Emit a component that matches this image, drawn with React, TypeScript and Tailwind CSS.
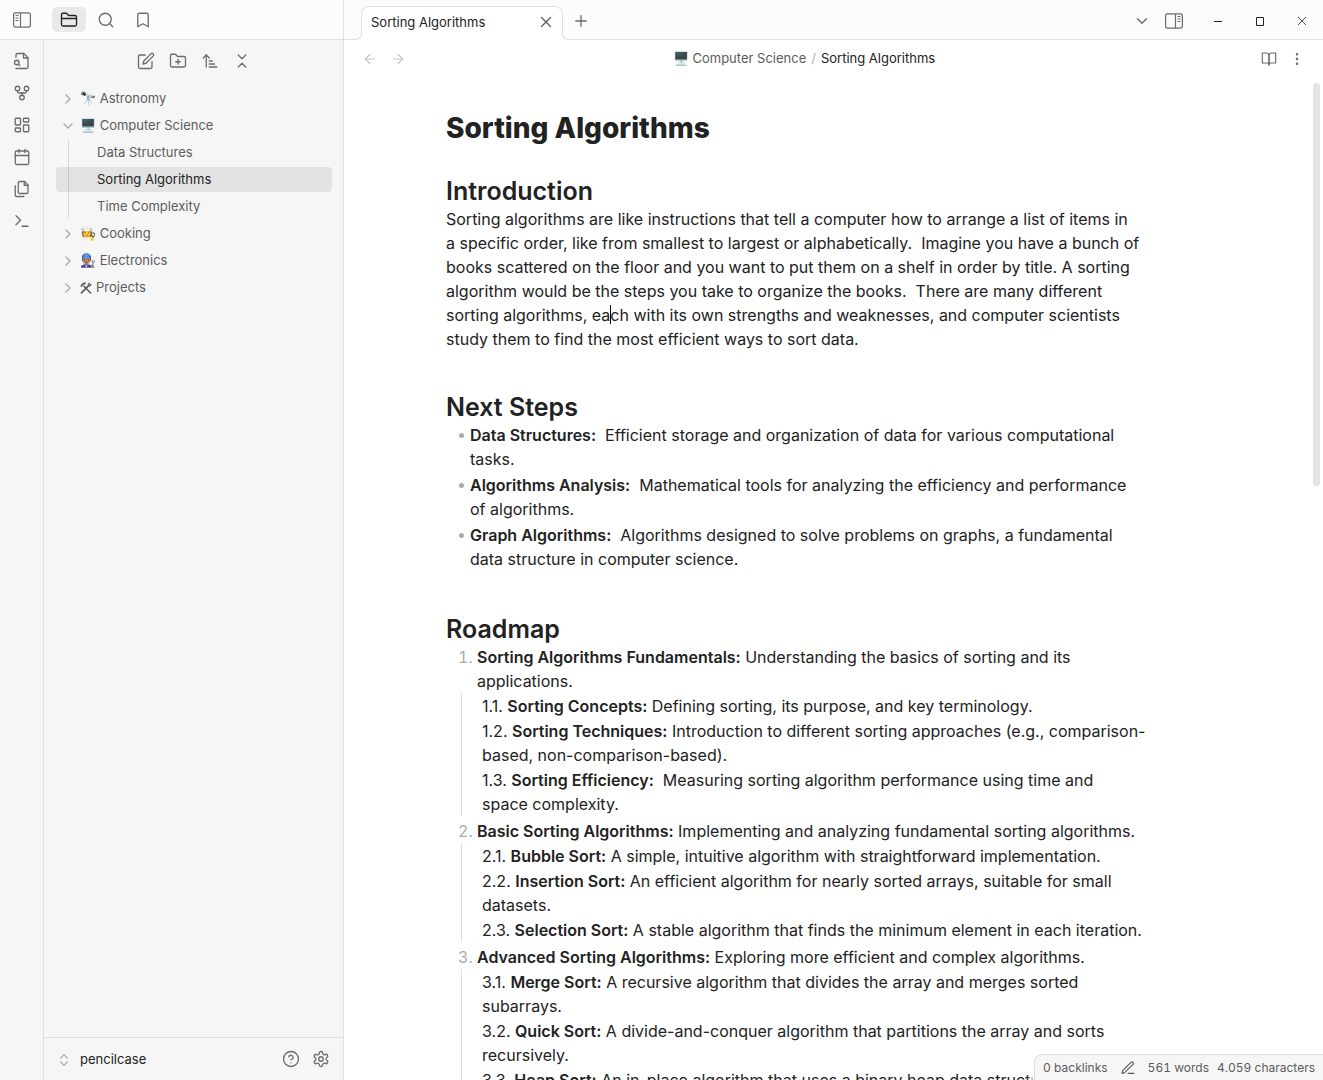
import React from "react";

const glyph = (size: number, stroke: number, className: string) => ({
  width: size,
  height: size,
  viewBox: "0 0 24 24",
  fill: "none",
  stroke: "currentColor",
  strokeWidth: stroke,
  strokeLinecap: "round" as const,
  strokeLinejoin: "round" as const,
  className: "shrink-0 " + className,
  "aria-hidden": true,
});

type IconProps = { paths: string[]; size?: number; stroke?: number; className?: string };

function Icon({ paths, size = 18, stroke = 1.75, className = "" }: IconProps) {
  return (
    <svg {...glyph(size, stroke, className)}>
      {paths.map((d) => (
        <path key={d} d={d} />
      ))}
    </svg>
  );
}

const circle = (x: number, y: number, r: number) =>
  `M${x - r} ${y}a${r} ${r} 0 1 0 ${2 * r} 0a${r} ${r} 0 1 0 ${-2 * r} 0`;
const box = (x: number, y: number, w: number, h: number) =>
  `M${x + 1} ${y}h${w - 2}a1 1 0 0 1 1 1v${h - 2}a1 1 0 0 1 -1 1h${2 - w}a1 1 0 0 1 -1 -1v${2 - h}a1 1 0 0 1 1 -1z`;

const FOLDER = "M4 20h16a2 2 0 0 0 2-2V8a2 2 0 0 0-2-2h-7.93a2 2 0 0 1-1.66-.9l-.82-1.2A2 2 0 0 0 7.93 3H4a2 2 0 0 0-2 2v13c0 1.1.9 2 2 2Z";

const icons = {
  folder: [FOLDER, "M2 10h20"],
  search: [circle(11, 11, 8), "m21 21-4.3-4.3"],
  bookmark: ["m19 21-7-4-7 4V5a2 2 0 0 1 2-2h10a2 2 0 0 1 2 2v16z"],
  fileSearch: [
    "M4 22h14a2 2 0 0 0 2-2V7.5L14.5 2H6a2 2 0 0 0-2 2v3",
    "M14 2v6h6",
    circle(5, 14, 3),
    "m9 18-1.5-1.5",
  ],
  fork: [circle(12, 18, 3), circle(6, 6, 3), circle(18, 6, 3), "M18 9v1a2 2 0 0 1-2 2H8a2 2 0 0 1-2-2V9", "M12 12v3"],
  dashboard: [box(3, 3, 7, 9), box(14, 3, 7, 5), box(14, 12, 7, 9), box(3, 16, 7, 5)],
  calendar: ["M5 4h14a2 2 0 0 1 2 2v14a2 2 0 0 1-2 2H5a2 2 0 0 1-2-2V6a2 2 0 0 1 2-2z", "M16 2v4", "M8 2v4", "M3 10h18"],
  files: [
    "M15.5 2H8.6c-.4 0-.8.2-1.1.5-.3.3-.5.7-.5 1.1v12.8c0 .4.2.8.5 1.1.3.3.7.5 1.1.5h9.8c.4 0 .8-.2 1.1-.5.3-.3.5-.7.5-1.1V6.5L15.5 2z",
    "M3 7.6v12.8c0 .4.2.8.5 1.1.3.3.7.5 1.1.5h9.8",
    "M15 2v5h5",
  ],
  terminal: ["m4 17 6-6-6-6", "M12 19h8"],
  edit: [
    "M11 4H4a2 2 0 0 0-2 2v14a2 2 0 0 0 2 2h14a2 2 0 0 0 2-2v-7",
    "M18.5 2.5a2.121 2.121 0 0 1 3 3L12 15l-4 1 1-4 9.5-9.5z",
  ],
  folderPlus: [FOLDER, "M12 10v6", "M9 13h6"],
  sort: ["m3 8 4-4 4 4", "M7 4v16", "M11 12h4", "M11 16h7", "M11 20h10"],
  collapse: ["m7 20 5-5 5 5", "m7 4 5 5 5-5"],
  chevronsUpDown: ["m7 15 5 5 5-5", "m7 9 5-5 5 5"],
  chevronRight: ["m9 18 6-6-6-6"],
  chevronDown: ["m6 9 6 6 6-6"],
  x: ["M18 6 6 18", "m6 6 12 12"],
  plus: ["M5 12h14", "M12 5v14"],
  left: ["m12 19-7-7 7-7", "M19 12H5"],
  right: ["M5 12h14", "m12 5 7 7-7 7"],
  book: ["M2 3h6a4 4 0 0 1 4 4v14a3 3 0 0 0-3-3H2z", "M22 3h-6a4 4 0 0 0-4 4v14a3 3 0 0 1 3-3h7z"],
  more: [circle(12, 12, 1), circle(12, 5, 1), circle(12, 19, 1)],
  help: [circle(12, 12, 10), "M9.09 9a3 3 0 0 1 5.83 1c0 2-3 3-3 3", "M12 17h.01"],
  gear: [
    "M12.22 2h-.44a2 2 0 0 0-2 2v.18a2 2 0 0 1-1 1.73l-.43.25a2 2 0 0 1-2 0l-.15-.08a2 2 0 0 0-2.73.73l-.22.38a2 2 0 0 0 .73 2.73l.15.1a2 2 0 0 1 1 1.72v.51a2 2 0 0 1-1 1.74l-.15.09a2 2 0 0 0-.73 2.73l.22.38a2 2 0 0 0 2.73.73l.15-.08a2 2 0 0 1 2 0l.43.25a2 2 0 0 1 1 1.73V20a2 2 0 0 0 2 2h.44a2 2 0 0 0 2-2v-.18a2 2 0 0 1 1-1.73l.43-.25a2 2 0 0 1 2 0l.15.08a2 2 0 0 0 2.73-.73l.22-.39a2 2 0 0 0-.73-2.73l-.15-.08a2 2 0 0 1-1-1.74v-.5a2 2 0 0 1 1-1.74l.15-.09a2 2 0 0 0 .73-2.73l-.22-.38a2 2 0 0 0-2.73-.73l-.15.08a2 2 0 0 1-2 0l-.43-.25a2 2 0 0 1-1-1.73V4a2 2 0 0 0-2-2z",
    circle(12, 12, 3),
  ],
  pencil: ["M12 20h9", "M16.5 3.5a2.12 2.12 0 0 1 3 3L7 19l-4 1 1-4Z"],
};

function SidebarIcon({ flip = false }: { flip?: boolean }) {
  return (
    <svg
      width="18"
      height="16"
      viewBox="0 0 18 16"
      fill="none"
      stroke="currentColor"
      className={flip ? "shrink-0 -scale-x-100" : "shrink-0"}
      aria-hidden
    >
      <rect x="0.6" y="0.9" width="16.8" height="14.2" rx="2" strokeWidth="1.2" />
      <path d="M7.5 1v14" strokeWidth="1.2" />
      <path d="M2.5 3.5h3M2.5 6h3M2.5 8.5h3" strokeWidth="1" />
    </svg>
  );
}

function ToolsIcon() {
  return (
    <svg width="12" height="12" viewBox="0 0 12 12" fill="none" stroke="currentColor" className="mr-1 shrink-0" aria-hidden>
      <path d="M4 4.2 10.6 11" strokeWidth="1.6" strokeLinecap="round" />
      <path d="M1 4.6 2.4 2.4 5.6 .9" strokeWidth="1.9" strokeLinejoin="round" />
      <path d="M1.4 10.8 8.4 3.8" strokeWidth="1.7" strokeLinecap="round" />
      <path d="M9.9 .9 8.3 2.3 8.6 3.6 9.9 3.8 11.2 2.3" strokeWidth="1.3" strokeLinejoin="round" />
    </svg>
  );
}

function IconButton({ label, className = "", children }: { label: string; className?: string; children: React.ReactNode }) {
  return (
    <button type="button" aria-label={label} className={"flex shrink-0 items-center justify-center " + className}>
      {children}
    </button>
  );
}

function TitleBar() {
  return (
    <header className="flex h-10 shrink-0 bg-[#fcfcfc] text-[#6b6b6b]">
      <div className="flex w-[344px] shrink-0 items-center border-r border-b border-[#e0e0e0]">
        <IconButton label="Toggle left sidebar" className="h-7 w-11">
          <SidebarIcon />
        </IconButton>
        <div className="ml-2 flex gap-[3px]">
          <IconButton label="Files" className="h-[25px] w-[34px] rounded-[5px] bg-[#e9e9e9] text-[#222]">
            <Icon paths={icons.folder} />
          </IconButton>
          <IconButton label="Search" className="h-[25px] w-[34px]">
            <Icon paths={icons.search} />
          </IconButton>
          <IconButton label="Bookmarks" className="h-[25px] w-[34px]">
            <Icon paths={icons.bookmark} />
          </IconButton>
        </div>
      </div>
      <div className="flex min-w-0 flex-1">
        <div className="w-[17px] border-b border-[#e0e0e0]" />
        <div className="relative mt-1.5 flex w-[202px] items-center justify-between pr-2 pl-2.5">
          <div className="absolute inset-x-0 top-0 bottom-1.5 rounded-t-lg border border-b-0 border-[#e0e0e0] bg-white" />
          <div className="absolute inset-x-0 bottom-0 h-1.5 bg-white" />
          <div className="absolute bottom-0 -left-[5px] size-1.5 bg-white">
            <div className="size-full rounded-br-md border-r border-b border-[#e0e0e0] bg-[#fcfcfc]" />
          </div>
          <div className="absolute -right-[5px] bottom-0 size-1.5 bg-white">
            <div className="size-full rounded-bl-md border-b border-l border-[#e0e0e0] bg-[#fcfcfc]" />
          </div>
          <span className="relative truncate text-[13px] text-[#222]">Sorting Algorithms</span>
          <IconButton label="Close tab" className="relative h-5 w-[18px] pb-0.5 text-[#5c5c5c]">
            <Icon paths={icons.x} />
          </IconButton>
        </div>
        <div className="flex min-w-0 flex-1 items-center border-b border-[#e0e0e0] pt-0.5">
          <IconButton label="New tab" className="ml-1 size-7">
            <Icon paths={icons.plus} />
          </IconButton>
          <div className="flex-1" />
          <IconButton label="Tab list" className="size-7">
            <Icon paths={icons.chevronDown} />
          </IconButton>
          <IconButton label="Toggle right sidebar" className="ml-0.5 h-7 w-8">
            <SidebarIcon flip />
          </IconButton>
          <div className="ml-[7px] flex text-[#222]">
            <IconButton label="Minimize" className="h-7 w-[42px]">
              <svg width="10" height="10" viewBox="0 0 10 10" stroke="currentColor" aria-hidden>
                <path d="M1 5.5h8" />
              </svg>
            </IconButton>
            <IconButton label="Maximize" className="h-7 w-[42px]">
              <svg width="10" height="10" viewBox="0 0 10 10" fill="none" stroke="currentColor" aria-hidden>
                <path d="M1.5 1.5h7v8h-7z" />
              </svg>
            </IconButton>
            <IconButton label="Close" className="h-7 w-[42px]">
              <svg width="10" height="10" viewBox="0 0 10 10" stroke="currentColor" strokeWidth="0.8" aria-hidden>
                <path d="M1 1l8 8M9 1l-8 8" />
              </svg>
            </IconButton>
          </div>
        </div>
      </div>
    </header>
  );
}

const ribbon: [string, string[]][] = [
  ["Quick switcher", icons.fileSearch],
  ["Graph view", icons.fork],
  ["New canvas", icons.dashboard],
  ["Daily note", icons.calendar],
  ["Insert template", icons.files],
  ["Command palette", icons.terminal],
];

function Ribbon() {
  return (
    <nav className="flex w-11 shrink-0 flex-col items-center gap-1.5 border-r border-[#e0e0e0] bg-[#f6f6f6] pt-2 text-[#6b6b6b]">
      {ribbon.map(([label, paths]) => (
        <IconButton key={label} label={label} className="size-[26px]">
          <Icon paths={paths} />
        </IconButton>
      ))}
    </nav>
  );
}

function Folder({ name, open = false, icon }: { name: string; open?: boolean; icon?: React.ReactNode }) {
  return (
    <button type="button" aria-expanded={open} className="flex h-[25px] w-full items-center rounded pl-1">
      <Icon paths={open ? icons.chevronDown : icons.chevronRight} size={16} stroke={2} className="text-[#ababab]" />
      <span className="ml-1 flex items-center">
        {icon}
        {name}
      </span>
    </button>
  );
}

function FileRow({ name, active = false }: { name: string; active?: boolean }) {
  return (
    <button
      type="button"
      className={
        active
          ? "flex h-[25px] w-full items-center rounded bg-[#e3e3e3] pl-[41px] text-[#222]"
          : "flex h-[25px] w-full items-center rounded pl-[41px]"
      }
    >
      {name}
    </button>
  );
}

function Explorer() {
  return (
    <aside className="flex w-[300px] shrink-0 flex-col border-r border-[#e0e0e0] bg-[#f6f6f6] text-[13px] text-[#5c5c5c]">
      <div className="flex justify-center gap-1.5 py-2 text-[#6b6b6b]">
        <IconButton label="New note" className="size-[26px]"><Icon paths={icons.edit} /></IconButton>
        <IconButton label="New folder" className="size-[26px]"><Icon paths={icons.folderPlus} /></IconButton>
        <IconButton label="Change sort order" className="size-[26px]"><Icon paths={icons.sort} /></IconButton>
        <IconButton label="Collapse all" className="size-[26px]"><Icon paths={icons.collapse} /></IconButton>
      </div>
      <div className="flex flex-1 flex-col gap-0.5 px-3 pt-1 pr-[11px]">
        <Folder name="🔭 Astronomy" />
        <Folder name="🖥️ Computer Science" open />
        <div className="relative flex flex-col gap-0.5">
          <FileRow name="Data Structures" />
          <FileRow name="Sorting Algorithms" active />
          <FileRow name="Time Complexity" />
          <div className="absolute inset-y-0 left-3 w-px bg-black/12" />
        </div>
        <Folder name="🧑‍🍳 Cooking" />
        <Folder name="👨🏽‍🔧 Electronics" />
        <Folder name="Projects" icon={<ToolsIcon />} />
      </div>
      <div className="flex h-[43px] items-center border-t border-[#e0e0e0] pr-[13px] pl-3 text-[#6b6b6b]">
        <button type="button" className="flex flex-1 items-center gap-2 pt-px text-[#222]">
          <Icon paths={icons.chevronsUpDown} size={16} className="text-[#ababab]" />
          pencilcase
        </button>
        <IconButton label="Help" className="h-7 w-[30px]"><Icon paths={icons.help} /></IconButton>
        <IconButton label="Settings" className="ml-1.5 h-7 w-[18px]"><Icon paths={icons.gear} /></IconButton>
      </div>
    </aside>
  );
}

function Heading({ children }: { children: React.ReactNode }) {
  return <h2 className="text-[25px] leading-[31px] font-semibold">{children}</h2>;
}

const nextSteps = [
  ["Data Structures:", "\u00a0 Efficient storage and organization of data for various computational tasks."],
  ["Algorithms Analysis:", "\u00a0 Mathematical tools for analyzing the efficiency and performance of algorithms."],
  ["Graph Algorithms:", "\u00a0 Algorithms designed to solve problems on graphs, a fundamental data structure in computer science."],
];

const roadmap = [
  {
    title: "Sorting Algorithms Fundamentals:",
    text: "Understanding the basics of sorting and its applications.",
    items: [
      ["Sorting Concepts:", " Defining sorting, its purpose, and key terminology."],
      ["Sorting Techniques:", " Introduction to different sorting approaches (e.g., comparison-based, non-comparison-based)."],
      ["Sorting Efficiency:", "\u00a0 Measuring sorting algorithm performance using time and space\u00a0complexity."],
    ],
  },
  {
    title: "Basic Sorting Algorithms:",
    text: "Implementing and analyzing fundamental sorting algorithms.",
    items: [
      ["Bubble Sort:", " A simple, intuitive algorithm with straightforward implementation."],
      ["Insertion Sort:", " An efficient algorithm for nearly sorted arrays, suitable for small datasets."],
      ["Selection Sort:", " A stable algorithm that finds the minimum element in each iteration."],
    ],
  },
  {
    title: "Advanced Sorting Algorithms:",
    text: "Exploring more efficient and complex algorithms.",
    items: [
      ["Merge Sort:", " A recursive algorithm that divides the array and merges sorted subarrays."],
      ["Quick Sort:", " A divide-and-conquer algorithm that partitions the array and sorts recursively."],
      ["Heap Sort:", " An in-place algorithm that uses a binary heap data structure."],
    ],
  },
];

function Note() {
  return (
    <article className="max-w-[802px] pt-8 pl-[102px] text-base leading-6 text-[#222]">
      <h1 className="text-[28px] leading-9 font-extrabold">Sorting Algorithms</h1>
      <section className="pt-[30px]">
        <Heading>Introduction</Heading>
        <p className="max-w-[694px]">
          Sorting algorithms are like instructions that tell a computer how to arrange a list of items in a specific
          order, like from smallest to largest or alphabetically. &nbsp;Imagine you have a bunch of books scattered on the
          floor and you want to put them on a shelf in order by title. A sorting algorithm would be the steps you take to
          organize the books. &nbsp;There are many different sorting algorithms, ea
          <span className="relative">
            <span className="absolute top-0 left-0 h-[19px] w-px bg-black" />
          </span>
          ch with its own strengths and weaknesses, and computer scientists study them to find the most efficient ways to
          sort data.
        </p>
      </section>
      <section className="pt-[41px]">
        <Heading>Next Steps</Heading>
        <ul className="flex flex-col gap-0.5 pb-0.5">
          {nextSteps.map(([title, text]) => (
            <li key={title} className="flex">
              <span className="mt-2.5 mr-1.5 ml-[13px] size-[5px] shrink-0 rounded-full bg-[#ababab]" />
              <span>
                <strong className="font-semibold">{title}</strong>
                {text}
              </span>
            </li>
          ))}
        </ul>
      </section>
      <section className="pt-[41px]">
        <Heading>Roadmap</Heading>
        <ol className="flex flex-col gap-[3px]">
          {roadmap.map((part, i) => (
            <li key={part.title}>
              <div className="flex pl-3">
                <span className="w-[19px] shrink-0 text-[#ababab] tabular-nums">{`${i + 1}.`}</span>
                <span>
                  <strong className="font-semibold">{part.title}</strong> {part.text}
                </span>
              </div>
              <ol className="ml-[15px] flex flex-col gap-px border-l border-[#dedede] pt-px pl-5">
                {part.items.map(([title, text], j) => (
                  <li key={title}>
                    {`${i + 1}.${j + 1}. `}
                    <strong className="font-semibold">{title}</strong>
                    {text}
                  </li>
                ))}
              </ol>
            </li>
          ))}
        </ol>
      </section>
    </article>
  );
}

export default function App() {
  return (
    <div className="flex h-screen flex-col overflow-hidden bg-white font-['Inter',sans-serif]">
      <TitleBar />
      <div className="flex min-h-0 flex-1">
        <Ribbon />
        <Explorer />
        <main className="relative flex min-w-0 flex-1 flex-col">
          <div className="flex h-[38px] shrink-0 items-center px-[17px] text-[13px]">
            <IconButton label="Back" className="h-6 w-[18px] text-[#c4c4c4]"><Icon paths={icons.left} size={16} /></IconButton>
            <IconButton label="Forward" className="ml-2.5 h-6 w-[18px] text-[#c4c4c4]"><Icon paths={icons.right} size={16} /></IconButton>
            <div className="flex flex-1 justify-center pr-[59px]">
              <a href="#folder" className="text-[#5c5c5c]">🖥️ Computer Science</a>
              <span className="px-[5px] text-[#ababab]">/</span>
              <span className="text-[#222]">Sorting Algorithms</span>
            </div>
            <IconButton label="Reading view" className="h-6 w-[18px] text-[#6b6b6b]"><Icon paths={icons.book} size={16} /></IconButton>
            <IconButton label="More options" className="ml-2.5 h-6 w-[18px] text-[#6b6b6b]"><Icon paths={icons.more} size={16} /></IconButton>
          </div>
          <div className="min-h-0 flex-1 overflow-hidden">
            <Note />
          </div>
          <div className="absolute top-[43px] right-[3px] h-[403px] w-[7px] rounded-full bg-[#e3e3e3]" />
          <div className="absolute right-0 bottom-0 flex h-[26px] items-center rounded-tl-lg border-t border-l border-[#e0e0e0] bg-[#f6f6f6] px-2 text-xs text-[#5c5c5c] tabular-nums shadow-[0_0_4px_4px_#ffffffcc]">
            <span>0 backlinks</span>
            <Icon paths={icons.pencil} size={16} className="mx-3" />
            <span>561 words</span>
            <span className="ml-2">4.059 characters</span>
          </div>
        </main>
      </div>
    </div>
  );
}
